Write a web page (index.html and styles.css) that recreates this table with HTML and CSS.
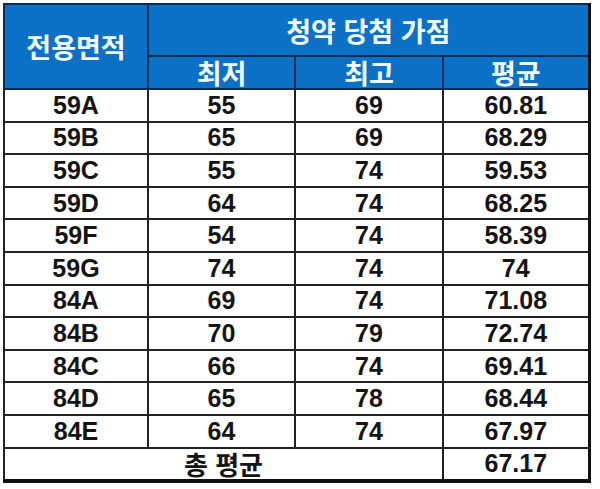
FILE: index.html
```html
<!DOCTYPE html>
<html lang="ko">
<head>
<meta charset="utf-8">
<link rel="stylesheet" href="styles.css">
</head>
<body>
<table class="score">
  <colgroup>
    <col class="c1"><col class="c2"><col class="c3"><col class="c4">
  </colgroup>
  <thead>
    <tr class="h1">
      <th rowspan="2">전용면적</th>
      <th colspan="3">청약 당첨 가점</th>
    </tr>
    <tr class="h2">
      <th>최저</th><th>최고</th><th>평균</th>
    </tr>
  </thead>
  <tbody>
    <tr><td>59A</td><td>55</td><td>69</td><td>60.81</td></tr>
    <tr><td>59B</td><td>65</td><td>69</td><td>68.29</td></tr>
    <tr><td>59C</td><td>55</td><td>74</td><td>59.53</td></tr>
    <tr><td>59D</td><td>64</td><td>74</td><td>68.25</td></tr>
    <tr><td>59F</td><td>54</td><td>74</td><td>58.39</td></tr>
    <tr><td>59G</td><td>74</td><td>74</td><td>74</td></tr>
    <tr><td>84A</td><td>69</td><td>74</td><td>71.08</td></tr>
    <tr><td>84B</td><td>70</td><td>79</td><td>72.74</td></tr>
    <tr><td>84C</td><td>66</td><td>74</td><td>69.41</td></tr>
    <tr><td>84D</td><td>65</td><td>78</td><td>68.44</td></tr>
    <tr><td>84E</td><td>64</td><td>74</td><td>67.97</td></tr>
    <tr class="total"><td colspan="3" class="label">총 평균</td><td>67.17</td></tr>
  </tbody>
</table>
</body>
</html>
```

FILE: styles.css
```css
html, body {
  margin: 0;
  padding: 0;
  background: #ffffff;
}
body {
  padding: 3px 0 0 3px;
}
.score {
  border-collapse: collapse;
  table-layout: fixed;
  width: 585px;
  font-family: "Liberation Sans", "Noto Sans CJK KR", Arial, sans-serif;
  font-weight: bold;
  color: #141414;
  border-top: 2px solid #1a2236;
  border-left: 2px solid #1a1a1a;
  border-right: 3px solid #111;
  border-bottom: 4px solid #111;
}
.c1 { width: 144px; }
.c2 { width: 147px; }
.c3 { width: 148px; }
.c4 { width: 146px; }
.score th {
  background: #0b71c7;
  color: #f2fbff;
  font-family: "Noto Sans CJK KR", "Liberation Sans", sans-serif;
  font-weight: bold;
  font-size: 27px;
  line-height: 1;
  padding: 0;
  border: 2px solid #0d2a52;
  text-align: center;
  vertical-align: middle;
}
.h1 { height: 52px; }
.h2 { height: 33px; }
.score td {
  font-size: 25px;
  line-height: 1;
  padding: 0;
  height: 30.6px;
  text-align: center;
  vertical-align: middle;
  border: 2px solid #222;
}
.score .label {
  font-family: "Noto Sans CJK KR", "Liberation Sans", sans-serif;
  font-size: 26px;
}
```
